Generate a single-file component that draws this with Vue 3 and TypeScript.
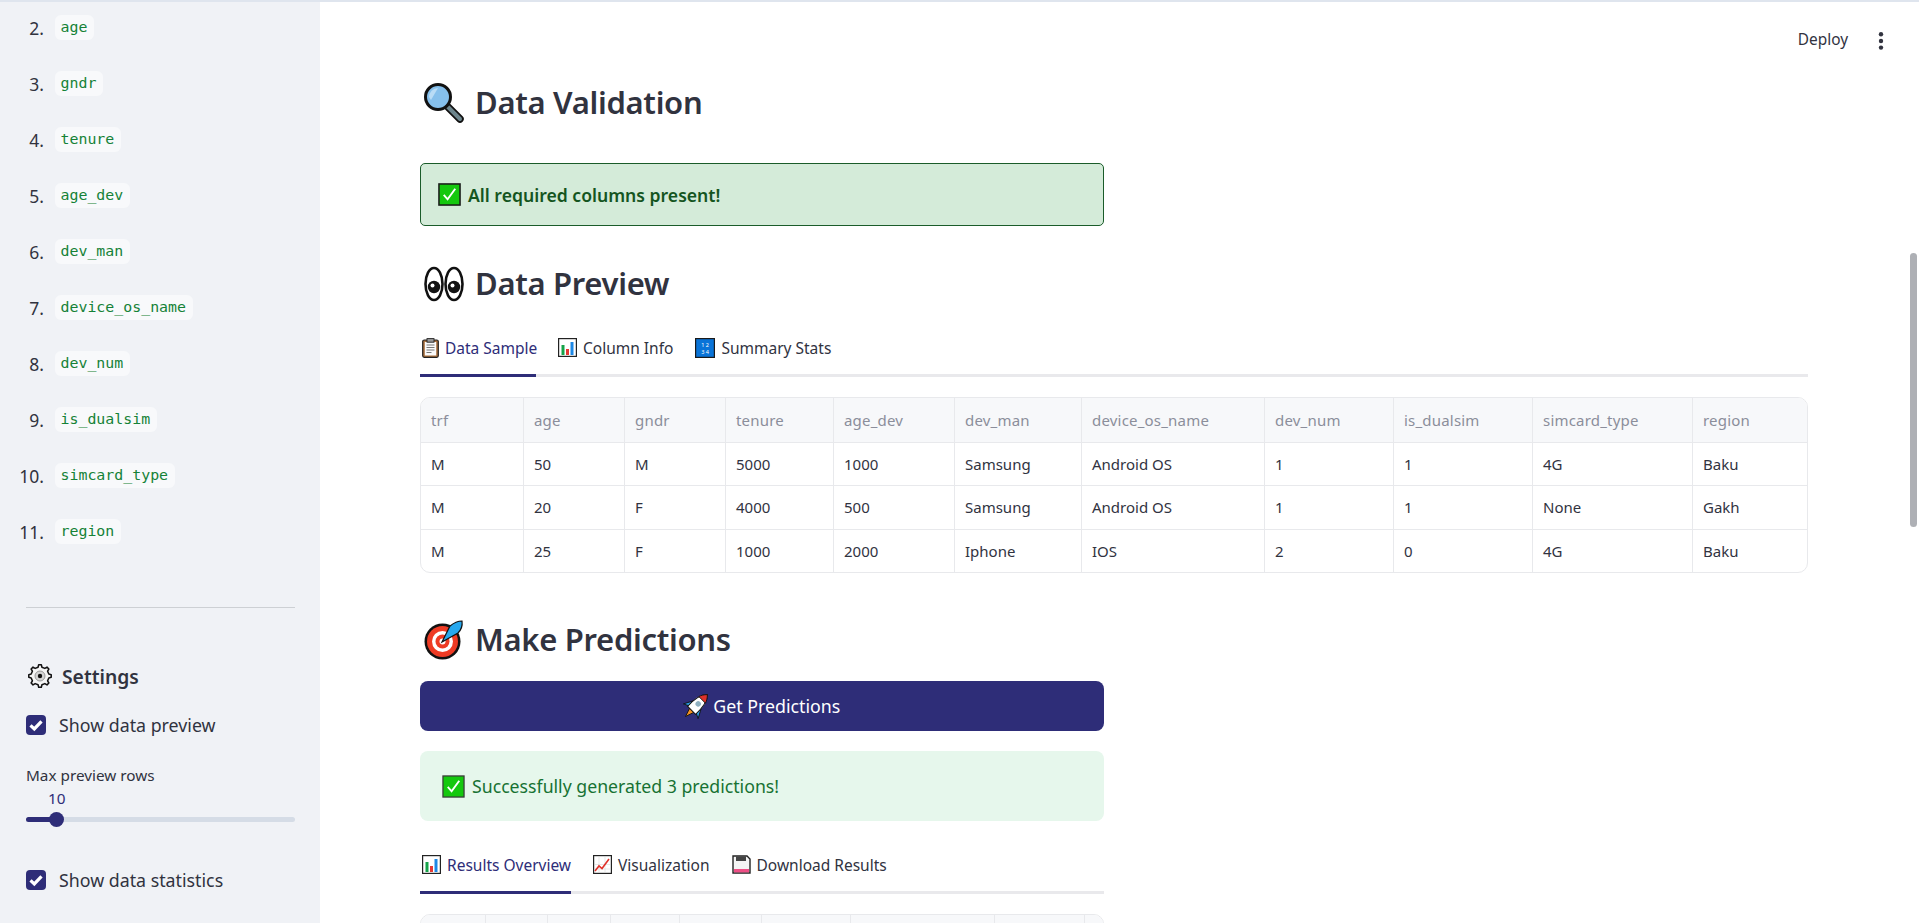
<template>
  <div class="page">
    <div class="topStrip"></div>
    <div class="frame">
      <aside class="sidebar">
        <ol class="columnList">
          <li v-for="(name, i) in columnNames" :key="name">
            <span class="num">{{ i + 2 }}.</span>
            <code>{{ name }}</code>
          </li>
        </ol>
        <hr />
        <div class="settingsTitle">
          <svg class="gear" viewBox="0 0 24 24" width="24" height="24">
            <path :d="gearPath" fill="#f5f5f5" stroke="#111" stroke-width="1.5" stroke-linejoin="round" />
            <circle cx="12" cy="12" r="5" fill="#d4d4d4" stroke="#888" stroke-width="0.8" />
            <circle cx="12" cy="12" r="2.2" fill="#111" />
          </svg>
          <span>Settings</span>
        </div>
        <label class="check first">
          <span class="box"><svg viewBox="0 0 20 20" width="20" height="20"><path d="M4.5 10.3l3.8 3.6 7.2-7.6" fill="none" stroke="#fff" stroke-width="3.2" /></svg></span>
          Show data preview
        </label>
        <div class="sliderLabel">Max preview rows</div>
        <div class="sliderValue">10</div>
        <div class="track">
          <div class="fill" :style="{ width: sliderFill + 'px' }"></div>
          <div class="thumb" :style="{ left: sliderFill - 7 + 'px' }"></div>
        </div>
        <label class="check second">
          <span class="box"><svg viewBox="0 0 20 20" width="20" height="20"><path d="M4.5 10.3l3.8 3.6 7.2-7.6" fill="none" stroke="#fff" stroke-width="3.2" /></svg></span>
          Show data statistics
        </label>
      </aside>

      <main class="main">
        <div class="topbar">
          <span class="deploy">Deploy</span>
          <svg class="dots" viewBox="0 0 6 20" width="6" height="20">
            <circle cx="3" cy="3.2" r="2.2" /><circle cx="3" cy="10" r="2.2" /><circle cx="3" cy="16.6" r="2.2" />
          </svg>
        </div>
        <div class="content">
          <h2 class="h1Block">
            <svg viewBox="0 0 40 40" width="40" height="40">
              <line x1="24" y1="24" x2="36" y2="36" stroke="#111" stroke-width="7.5" stroke-linecap="round" />
              <line x1="24" y1="24" x2="36" y2="36" stroke="#6d858c" stroke-width="4" stroke-linecap="round" />
              <circle cx="14" cy="14" r="12.5" fill="#86c0ec" stroke="#111" stroke-width="3" />
              <path d="M5 14a9 9 0 0 1 9-9l-7 12z" fill="#b9dcf6" />
            </svg>
            <span>Data Validation</span>
          </h2>

          <div class="alertStrong">
            <svg viewBox="0 0 24 24" width="23" height="23">
              <rect x="1" y="1" width="22" height="22" fill="#14c80e" stroke="#1a1a1a" stroke-width="1.6" />
              <path d="M6 12.5l4 4.5 8-11" fill="none" stroke="#fff" stroke-width="2" />
            </svg>
            <span>All required columns present!</span>
          </div>

          <h2 class="h2Block">
            <svg viewBox="0 0 40 36" width="40" height="36">
              <ellipse cx="10" cy="18" rx="8.5" ry="16" fill="#fff" stroke="#111" stroke-width="2.6" />
              <ellipse cx="30" cy="18" rx="8.5" ry="16" fill="#fff" stroke="#111" stroke-width="2.6" />
              <circle cx="10" cy="21" r="6.2" fill="#111" />
              <circle cx="30" cy="21" r="6.2" fill="#111" />
              <circle cx="8.5" cy="19.5" r="2" fill="#fff" />
              <circle cx="28.5" cy="19.5" r="2" fill="#fff" />
            </svg>
            <span>Data Preview</span>
          </h2>

          <div class="tabs">
            <div class="tab active" style="width: 116px">
              <svg viewBox="0 0 17 20" width="17" height="20">
                <rect x="0.7" y="2" width="15.6" height="17.3" rx="1.5" fill="#a9703e" stroke="#222" stroke-width="1.2" />
                <rect x="2.8" y="4" width="11.4" height="13.5" fill="#fbfbfb" />
                <rect x="5" y="0.6" width="7" height="3.6" fill="#999" stroke="#222" stroke-width="0.9" />
                <path d="M4.5 7h8M4.5 9.5h8M4.5 12h8M4.5 14.5h5" stroke="#777" stroke-width="1" />
              </svg>
              <span>Data Sample</span>
            </div>
            <div class="tab">
              <svg viewBox="0 0 19 19" width="19" height="19">
                <rect x="0.6" y="0.6" width="17.8" height="17.8" fill="#fff" stroke="#222" stroke-width="1.2" />
                <rect x="3.5" y="7" width="3" height="10" fill="#16a34a" />
                <rect x="8" y="11" width="3" height="6" fill="#e53935" />
                <rect x="12.5" y="4" width="3" height="13" fill="#1e88e5" />
              </svg>
              <span>Column Info</span>
            </div>
            <div class="tab">
              <svg viewBox="0 0 20 20" width="20" height="20">
                <rect x="0.6" y="0.6" width="18.8" height="18.8" fill="#0a74d8" stroke="#1a1a1a" stroke-width="1.2" />
                <text x="10" y="8.5" class="tiny">1 2</text>
                <text x="10" y="15.5" class="tiny">3 4</text>
              </svg>
              <span>Summary Stats</span>
            </div>
          </div>

          <div class="tableWrap">
            <table>
              <colgroup>
                <col v-for="w in previewWidths" :key="w.id" :style="{ width: w.px + 'px' }" />
              </colgroup>
              <thead>
                <tr>
                  <th v-for="h in previewHeaders" :key="h">{{ h }}</th>
                </tr>
              </thead>
              <tbody>
                <tr v-for="(row, r) in previewRows" :key="r">
                  <td v-for="(cell, c) in row" :key="c">{{ cell }}</td>
                </tr>
              </tbody>
            </table>
          </div>

          <h2 class="h3Block">
            <svg viewBox="0 0 40 40" width="40" height="40">
              <circle cx="18.5" cy="21.5" r="18" fill="#111" />
              <circle cx="18.5" cy="21.5" r="15.5" fill="#ee3b24" />
              <circle cx="18.5" cy="21.5" r="10.5" fill="#fff" />
              <circle cx="18.5" cy="21.5" r="7" fill="#ee3b24" />
              <circle cx="18.5" cy="21.5" r="3" fill="#fff" />
              <path d="M18 22L26 6q6-5 12-5 1 7-4 12z" fill="#27a8ee" stroke="#111" stroke-width="1.2" />
            </svg>
            <span>Make Predictions</span>
          </h2>

          <button class="predictBtn" type="button">
            <svg viewBox="1.5 1.5 21 21" width="26" height="26">
              <g transform="rotate(45 12 12)">
                <path d="M9.5 16.5L12 24l2.5-7.5z" fill="#f59322" stroke="#111" stroke-width="0.7" />
                <path d="M7.6 10.5L3.6 18l4-2zM16.4 10.5l4 7.5-4-2z" fill="#2a9fe8" stroke="#111" stroke-width="0.7" />
                <path d="M12-1C16 3 17 8 16.5 17h-9C7 8 8 3 12-1z" fill="#fff" stroke="#111" stroke-width="0.8" />
                <path d="M12-1c2 2 3.2 4 3.8 6H8.2C8.8 3 10 1 12-1z" fill="#e0312a" stroke="#111" stroke-width="0.7" />
                <circle cx="12" cy="9.5" r="2.2" fill="#8fb0c0" />
              </g>
            </svg>
            <span>Get Predictions</span>
          </button>

          <div class="alertSoft">
            <svg viewBox="0 0 24 24" width="23" height="23">
              <rect x="1" y="1" width="22" height="22" fill="#14c80e" stroke="#3a3a3a" stroke-width="1.3" />
              <path d="M6 12.5l4 4.5 8-11" fill="none" stroke="#fff" stroke-width="2" />
            </svg>
            <span>Successfully generated 3 predictions!</span>
          </div>

          <div class="tabs narrow">
            <div class="tab active" style="width: 151px">
              <svg viewBox="0 0 19 19" width="19" height="19">
                <rect x="0.6" y="0.6" width="17.8" height="17.8" fill="#fff" stroke="#222" stroke-width="1.2" />
                <rect x="3.5" y="7" width="3" height="10" fill="#16a34a" />
                <rect x="8" y="11" width="3" height="6" fill="#e53935" />
                <rect x="12.5" y="4" width="3" height="13" fill="#1e88e5" />
              </svg>
              <span>Results Overview</span>
            </div>
            <div class="tab">
              <svg viewBox="0 0 19 19" width="19" height="19">
                <rect x="0.6" y="0.6" width="17.8" height="17.8" fill="#fff" stroke="#222" stroke-width="1.2" />
                <path d="M1 9.5h17M1 14h17M6 1v17M12 1v17" stroke="#d0d0d0" stroke-width="0.5" />
                <path d="M2 16l4-5 3 2.5L16 4" fill="none" stroke="#e0312a" stroke-width="1.6" />
              </svg>
              <span>Visualization</span>
            </div>
            <div class="tab">
              <svg viewBox="0 0 19 19" width="19" height="19">
                <path d="M1 1h14l3 3v14H1z" fill="#f4f4f4" stroke="#222" stroke-width="1.4" />
                <rect x="4" y="1.4" width="10" height="4.6" fill="#444" />
                <rect x="2" y="14" width="15" height="3.4" fill="#ee4f86" />
              </svg>
              <span>Download Results</span>
            </div>
          </div>

          <div class="tableWrap resultsTable">
            <table>
              <colgroup>
                <col v-for="w in resultWidths" :key="w.id" :style="{ width: w.px + 'px' }" />
              </colgroup>
              <thead>
                <tr>
                  <th v-for="w in resultWidths" :key="w.id"></th>
                </tr>
              </thead>
            </table>
          </div>
        </div>

        <div class="scrollThumb"></div>
      </main>
    </div>
  </div>
</template>

<script setup lang="ts">
const columnNames = [
  "age",
  "gndr",
  "tenure",
  "age_dev",
  "dev_man",
  "device_os_name",
  "dev_num",
  "is_dualsim",
  "simcard_type",
  "region",
];

const sliderFill = 30;

const toCols = (list: number[]) => list.map((px, id) => ({ id, px }));
const previewWidths = toCols([102, 101, 101, 108, 121, 127, 183, 129, 139, 160, 117]);
const resultWidths = toCols([64, 62, 63, 69, 82, 89, 144, 90, 20]);

const previewHeaders = [
  "trf",
  "age",
  "gndr",
  "tenure",
  "age_dev",
  "dev_man",
  "device_os_name",
  "dev_num",
  "is_dualsim",
  "simcard_type",
  "region",
];

const previewRows = [
  ["M", "50", "M", "5000", "1000", "Samsung", "Android OS", "1", "1", "4G", "Baku"],
  ["M", "20", "F", "4000", "500", "Samsung", "Android OS", "1", "1", "None", "Gakh"],
  ["M", "25", "F", "1000", "2000", "Iphone", "IOS", "2", "0", "4G", "Baku"],
];

// 8 tooth gear outline
const gearPath = (() => {
  const teeth = 8;
  const pts: string[] = [];
  for (let i = 0; i < teeth; i++) {
    const a = (i / teeth) * Math.PI * 2;
    const step = Math.PI / teeth;
    const offs: [number, number][] = [
      [-0.55, 9],
      [-0.3, 11.3],
      [0.3, 11.3],
      [0.55, 9],
    ];
    for (const [o, r] of offs) {
      const t = a + o * step;
      pts.push(`${(12 + r * Math.cos(t)).toFixed(2)} ${(12 + r * Math.sin(t)).toFixed(2)}`);
    }
  }
  return "M" + pts.join("L") + "Z";
})();
</script>

<style>
html,
body {
  margin: 0;
  overflow: hidden;
  background: #fff;
}
</style>

<style scoped>
.page {
  height: 923px;
  overflow: hidden;
  font-family: "Noto Sans", sans-serif;
  color: #31333f;
  display: flex;
  flex-direction: column;
}
.topStrip {
  height: 2px;
  flex: none;
  background: #dfe5ee;
}
.frame {
  flex: 1;
  display: flex;
  min-height: 0;
}

.sidebar {
  width: 320px;
  flex: none;
  box-sizing: border-box;
  background: #f0f2f6;
  padding: 13px 25px 0 26px;
}
.columnList {
  list-style: none;
  margin: 0;
  padding: 0;
}
.columnList li {
  display: flex;
  align-items: center;
  height: 25px;
  margin-bottom: 31px;
}
.num {
  width: 30px;
  margin: 0 11px 0 -12px;
  font-size: 17.5px;
  text-align: right;
}
code {
  font-family: "DejaVu Sans Mono", monospace;
  font-size: 14.9px;
  line-height: 25px;
  padding: 0 7px 0 5.5px;
  border-radius: 6px;
  background: #f8f9fb;
  color: #158237;
}
hr {
  border: none;
  border-top: 1px solid #cdd0d4;
  margin: 63px 0 0;
}
.settingsTitle {
  display: flex;
  align-items: center;
  gap: 10px;
  margin: 56px 0 0 2px;
  height: 24px;
  font-size: 19.3px;
  font-weight: 600;
}
.check {
  display: flex;
  align-items: center;
  gap: 13px;
  height: 20px;
  font-size: 17.8px;
}
.check.first {
  margin-top: 27px;
}
.check.second {
  margin-top: 48px;
}
.box {
  width: 20px;
  height: 20px;
  border-radius: 4px;
  background: #2e2d78;
  flex: none;
}
.box svg {
  display: block;
}
.sliderLabel {
  margin-top: 30px;
  font-size: 15.3px;
  line-height: 20px;
}
.sliderValue {
  margin: 3px 0 0 22px;
  font-size: 15.3px;
  line-height: 20px;
  color: #2e2d78;
}
.track {
  position: relative;
  height: 5px;
  margin-top: 9px;
  border-radius: 3px;
  background: #d5dce6;
}
.fill {
  height: 100%;
  border-radius: 3px;
  background: #2e2d78;
}
.thumb {
  position: absolute;
  top: -5px;
  width: 15px;
  height: 15px;
  border-radius: 50%;
  background: #2e2d78;
}

.main {
  flex: 1;
  min-width: 0;
  position: relative;
}
.topbar {
  height: 76px;
  box-sizing: border-box;
  padding: 28px 35px 0 0;
  display: flex;
  justify-content: flex-end;
  align-items: flex-start;
  gap: 30px;
}
.deploy {
  font-size: 15.4px;
  line-height: 20px;
}
.dots {
  fill: #31333f;
  margin-top: 1px;
}
.content {
  padding: 0 111px 0 100px;
}
h2 {
  display: flex;
  align-items: center;
  gap: 11px;
  height: 50px;
  margin: 0;
  font-size: 31px;
  font-weight: 600;
  letter-spacing: -0.01em;
}
h2 span {
  margin-top: -2px;
}
.h1Block svg {
  margin-left: 4px;
}
.h2Block {
  margin-top: 33px;
}
.h2Block svg,
.h3Block svg {
  margin-left: 4px;
}
.h3Block {
  margin-top: 42px;
}
.alertStrong,
.alertSoft,
.predictBtn {
  width: 683.5px;
  box-sizing: border-box;
  display: flex;
  align-items: center;
}
.alertStrong {
  height: 63px;
  margin-top: 35px;
  padding-left: 17px;
  gap: 7px;
  background: #d4ebd9;
  border: 1px solid #1a5c2a;
  border-radius: 5px;
  color: #14551f;
  font-size: 17.6px;
  font-weight: 600;
}
.alertSoft {
  height: 70px;
  margin-top: 20px;
  padding-left: 22px;
  gap: 7px;
  background: #e6f7ec;
  border-radius: 8px;
  color: #177233;
  font-size: 17.7px;
}
.predictBtn {
  height: 50px;
  margin-top: 16px;
  justify-content: center;
  gap: 4px;
  border: none;
  border-radius: 8px;
  background: #2e2d78;
  color: #fff;
  font-family: inherit;
  font-size: 17.8px;
  padding: 0;
}

.tabs {
  display: flex;
  gap: 22px;
  height: 68px;
  box-sizing: border-box;
  border-bottom: 3px solid #e9e9ec;
}
.tabs.narrow {
  width: 683.5px;
  margin-top: 5px;
}
.tab {
  display: flex;
  align-items: center;
  gap: 6px;
  height: 68px;
  box-sizing: border-box;
  padding: 24px 0 12px;
  margin-bottom: -3px;
  font-size: 15.5px;
  border-bottom: 3px solid transparent;
  white-space: nowrap;
}
.tab svg {
  flex: none;
}
.tab.active {
  border-bottom-color: #2e2d78;
  color: #2e2d78;
  padding-left: 2px;
}
.tiny {
  font-size: 5.5px;
  fill: #fff;
  text-anchor: middle;
}

.tableWrap {
  margin-top: 20px;
  height: 176px;
  box-sizing: border-box;
  border: 1px solid #e8e9ec;
  border-radius: 10px;
  overflow: hidden;
}
.resultsTable {
  width: 683.5px;
}
table {
  border-collapse: separate;
  border-spacing: 0;
  table-layout: fixed;
  width: 100%;
}
th,
td {
  box-sizing: border-box;
  text-align: left;
  font-weight: 400;
  padding: 0 10px;
  border-left: 1px solid #e8e9ec;
  border-top: 1px solid #e8e9ec;
  white-space: nowrap;
  font-size: 15px;
}
th:first-child,
td:first-child {
  border-left: none;
}
th {
  height: 44px;
  border-top: none;
  background: #f7f8fa;
  color: #8b8e9b;
  letter-spacing: 0.2px;
}
td {
  height: 43.33px;
  color: #31333f;
}
.scrollThumb {
  position: absolute;
  top: 251px;
  right: 2px;
  width: 7px;
  height: 274px;
  border-radius: 4px;
  background: #aeb0b5;
}
</style>
